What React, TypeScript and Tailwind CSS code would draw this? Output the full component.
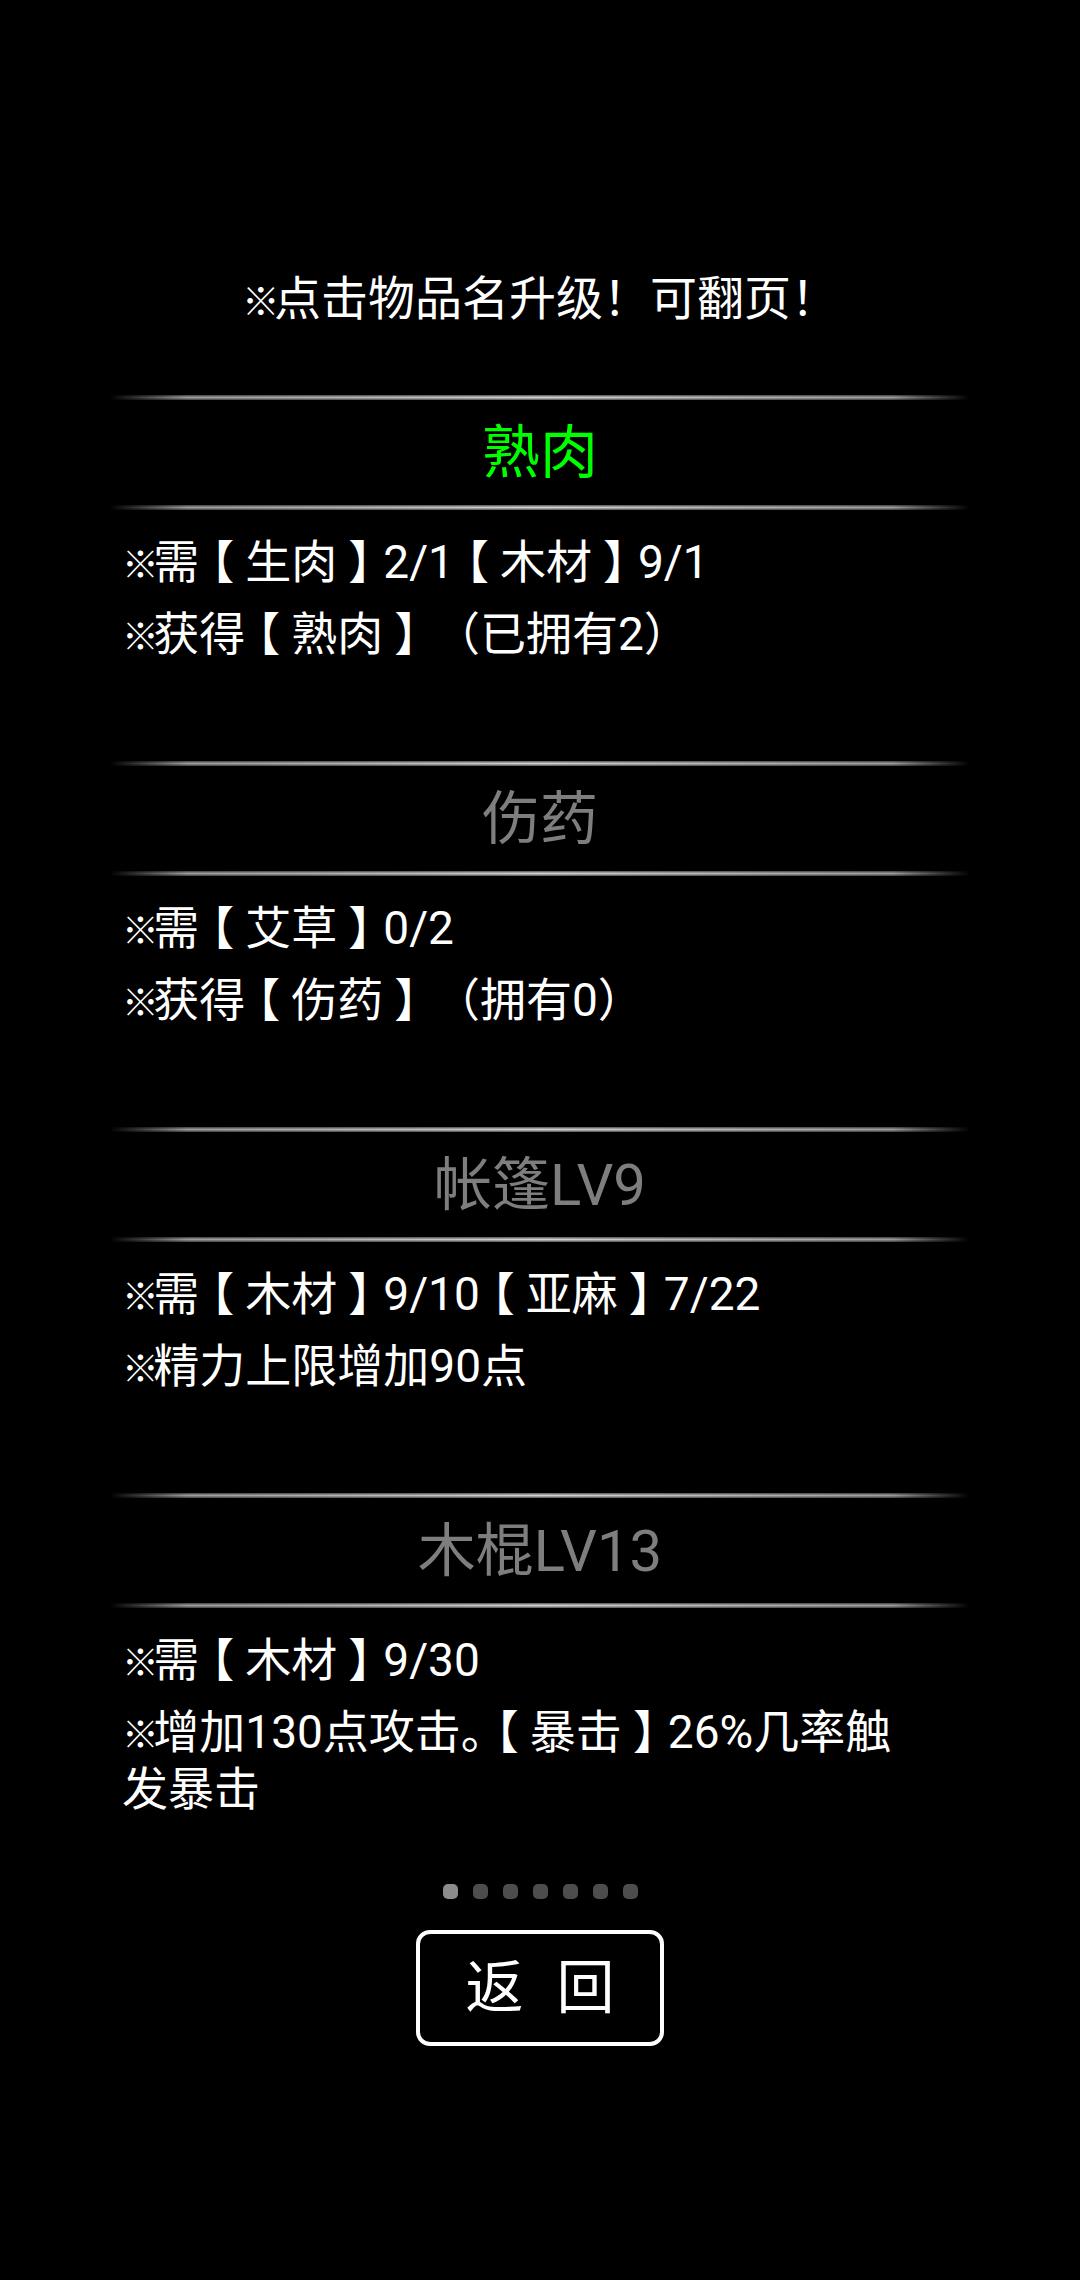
import React from "react";

type Item = { title: string; green?: boolean; lines: string[] };

const items: Item[] = [
  { title: "熟肉", green: true, lines: ["※需【生肉】2/1【木材】9/1", "※获得【熟肉】（已拥有2）"] },
  { title: "伤药", lines: ["※需【艾草】0/2", "※获得【伤药】（拥有0）"] },
  { title: "帐篷LV9", lines: ["※需【木材】9/10【亚麻】7/22", "※精力上限增加90点"] },
  { title: "木棍LV13", lines: ["※需【木材】9/30", "※增加130点攻击。【暴击】26%几率触发暴击"] },
];

function Rich({ text }: { text: string }) {
  const parts = text.split(/(※|【|】|（)/).filter((p) => p !== "");
  return (
    <>
      {parts.map((p, i) => {
        if (p === "※")
          return (
            <span key={i} className="mr-[-0.15em] text-[0.8em] leading-none">
              ※
            </span>
          );
        if (p === "【")
          return (
            <span key={i} className="relative left-[-0.24em]">
              【
            </span>
          );
        if (p === "】")
          return (
            <span key={i} className="relative left-[0.24em]">
              】
            </span>
          );
        if (p === "（")
          return (
            <span key={i} className="ml-[0.6em]">
              （
            </span>
          );
        return <React.Fragment key={i}>{p}</React.Fragment>;
      })}
    </>
  );
}

function Sep() {
  return (
    <div className="h-[5px] w-full bg-[linear-gradient(to_bottom,rgba(0,0,0,0.6),rgba(0,0,0,0)_50%,rgba(0,0,0,0.6)),linear-gradient(to_right,rgba(120,120,120,0),#9c9c9c_9%,#d2d2d2_50%,#9c9c9c_91%,rgba(120,120,120,0))]" />
  );
}

export default function App() {
  return (
    <div className="min-h-[2280px] w-full bg-black text-white font-[Roboto,'Noto_Sans_CJK_SC',sans-serif]">
      <div className="h-[327px] pt-[270px] text-center text-[47px] leading-[57px]">
        <Rich text="※点击物品名升级！可翻页！" />
      </div>
      <div className="mx-auto mt-[68px] w-[860px]">
        {items.map((it) => (
          <div key={it.title} className="h-[366px]">
            <Sep />
            <div
              className={
                "flex h-[105px] items-center justify-center text-[58px] leading-[70px] " +
                (it.green ? "text-[#00ff00]" : "text-[#7e7e7e]")
              }
            >
              {it.title}
            </div>
            <Sep />
            <div className="flex flex-col gap-[15px] pl-[12px] pr-[40px] pt-[24px] text-[46px] leading-[57px]">
              {it.lines.map((l) => (
                <div key={l}>
                  <Rich text={l} />
                </div>
              ))}
            </div>
          </div>
        ))}
      </div>
      <div className="mt-[25px] flex justify-center gap-[15px]">
        {[0, 1, 2, 3, 4, 5, 6].map((i) => (
          <div
            key={i}
            className={"h-[15px] w-[15px] rounded-[5px] " + (i === 0 ? "bg-[#8c8c8c]" : "bg-[#4d4d4d]")}
          />
        ))}
      </div>
      <div className="mt-[31px] flex justify-center">
        <div className="flex h-[116px] w-[248px] items-center justify-center gap-[33px] rounded-[14px] border-[4px] border-white text-[58px] leading-none">
          <span>返</span>
          <span>回</span>
        </div>
      </div>
    </div>
  );
}
